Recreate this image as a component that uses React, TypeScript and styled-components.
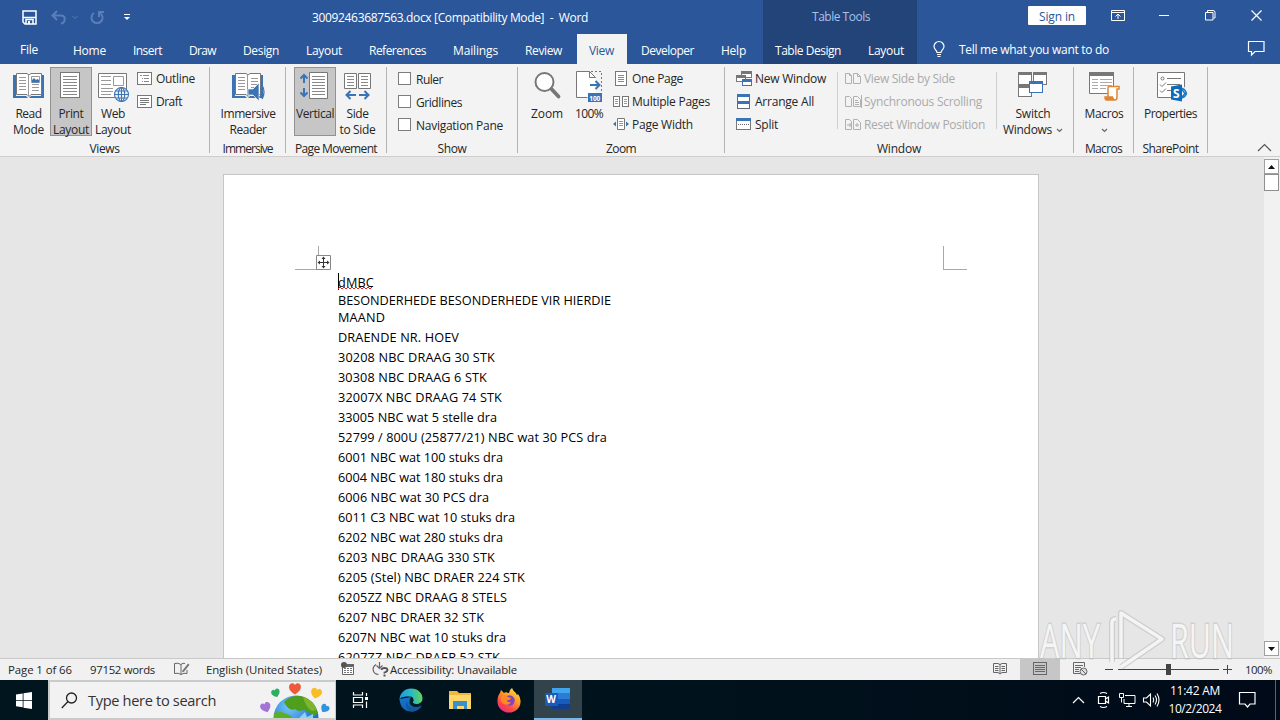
import React, { useLayoutEffect, useRef, useState } from 'react';
import styled, { createGlobalStyle } from 'styled-components';

const Global = createGlobalStyle`
  * { box-sizing: border-box; }
  body { margin: 0; overflow: hidden; background: #e6e6e6; }
  svg { display: block; flex: none; overflow: visible; }
`;

const ui = `"Open Sans", "Noto Sans", sans-serif`;

/* ---------- text set to a given advance width ---------- */
const Tracked = styled.span`
  display: inline-block;
  white-space: pre;
  flex: none;
`;

function Fit({ w, children }: { w: number; children: string }) {
  const ref = useRef<HTMLSpanElement>(null);
  const [spacing, setSpacing] = useState(0);
  useLayoutEffect(() => {
    if (ref.current) {
      const natural = ref.current.getBoundingClientRect().width;
      setSpacing((w - natural) / children.length);
    }
  }, [w, children]);
  return <Tracked ref={ref} style={{ letterSpacing: `${spacing}px` }}>{children}</Tracked>;
}

/* ---------- shell ---------- */
const Shell = styled.div`
  position: relative;
  width: 1280px;
  height: 720px;
  display: flex;
  flex-direction: column;
  overflow: hidden;
  font: 12px/16px ${ui};
  color: #262626;
`;

/* ---------- header ---------- */
const Header = styled.header`
  height: 64px;
  flex: none;
  display: flex;
  background: #2b579a;
  color: #fff;
`;
const HeadCol = styled.div<{ $w: number; $dark?: boolean }>`
  width: ${p => p.$w}px;
  display: flex;
  flex-direction: column;
  background: ${p => (p.$dark ? '#224479' : 'transparent')};
`;
const TitleRow = styled.div<{ $center?: boolean }>`
  height: 34px;
  display: flex;
  align-items: center;
  justify-content: ${p => (p.$center ? 'center' : 'flex-start')};
  padding-left: ${p => (p.$center ? 2 : 0)}px;
  color: ${p => (p.$center ? '#a9c1e6' : '#fff')};
`;
const QuickAccess = styled.div`
  width: 312px;
  padding-left: 22px;
  display: flex;
  align-items: center;
`;
const DocTitle = styled.div`
  padding-top: 2px;
`;
const TabRow = styled.nav`
  height: 30px;
  display: flex;
  gap: 2px;
`;
const Tab = styled.div<{ $active?: boolean; $file?: boolean }>`
  height: 30px;
  padding: ${p => (p.$file ? '8px 21px 0 20px' : '9px 13px 0 12px')};
  background: ${p => (p.$active ? '#f3f3f3' : 'transparent')};
  color: ${p => (p.$active ? '#2b579a' : '#fff')};
`;
const SignIn = styled.div`
  margin: -3px 25px 0 111px;
  width: 58px;
  height: 19px;
  padding: 3px 0 0 11px;
  line-height: 16px;
  background: #fff;
  border-radius: 1px;
  color: #2b579a;
`;
const TellMe = styled.div`
  display: flex;
  width: 363px;
  padding: 7px 0 0 15px;
`;
const TellText = styled.div`
  margin-left: 13px;
  padding-top: 1px;
  width: 289px;
`;
const Gap = styled.span<{ $w: number }>`
  width: ${p => p.$w}px;
  flex: none;
`;

/* ---------- ribbon ---------- */
const Ribbon = styled.section`
  height: 93px;
  flex: none;
  display: flex;
  padding-top: 3px;
  background: #f3f3f3;
  border-bottom: 1px solid #d0cecc;
`;
const Group = styled.div<{ $w: number }>`
  width: ${p => p.$w}px;
  height: 86px;
  flex: none;
  display: flex;
  flex-direction: column;
  border-right: 1px solid #b4b4b4;
`;
const GroupBody = styled.div<{ $pad: number }>`
  height: 73px;
  flex: none;
  display: flex;
  padding-left: ${p => p.$pad}px;
`;
const GroupLabel = styled.div`
  padding-top: 1px;
  text-align: center;
`;
const Big = styled.div<{ $w: number; $on?: boolean }>`
  width: ${p => p.$w}px;
  height: 69px;
  flex: none;
  display: flex;
  flex-direction: column;
  align-items: center;
  padding-top: 3px;
  border: 1px solid ${p => (p.$on ? '#929292' : 'transparent')};
  background: ${p => (p.$on ? '#c6c6c6' : 'transparent')};
`;
const BigIcon = styled.div`
  height: 35px;
  flex: none;
`;
const BigLine = styled.div`
  height: 16px;
  flex: none;
  display: flex;
  justify-content: center;
  align-items: center;
`;
const Rows = styled.div<{ $left?: number; $w?: number }>`
  display: flex;
  flex-direction: column;
  margin-left: ${p => p.$left ?? 0}px;
  width: ${p => (p.$w ? p.$w + 'px' : 'auto')};
`;
const Row = styled.div<{ $dim?: boolean }>`
  height: 23px;
  display: flex;
  align-items: center;
  color: ${p => (p.$dim ? '#aaa' : '#262626')};
`;
const RowIcon = styled.span<{ $w: number }>`
  width: ${p => p.$w}px;
  display: flex;
  flex: none;
`;
const RowText = styled.span`
  display: flex;
  padding-top: 1px;
`;
const Check = styled.span`
  width: 13px;
  height: 13px;
  margin: -3px 5px 0 0;
  background: #fff;
  border: 1px solid #7d7d7d;
`;
const CheckRow = styled(Row)`
  padding-top: 2px;
`;
const Divider = styled.span`
  width: 1px;
  height: 57px;
  margin-top: 5px;
  background: #cfcfcf;
`;
const RibbonEnd = styled.div`
  flex: 1;
  display: flex;
  justify-content: flex-end;
  align-items: flex-end;
  padding: 0 8px 4px 0;
`;

/* ---------- document ---------- */
const Workspace = styled.main`
  height: 501px;
  flex: none;
  display: flex;
  justify-content: space-between;
  padding-left: 223px;
  background: #e6e6e6;
`;
const Page = styled.article`
  position: relative;
  width: 816px;
  height: 484px;
  margin-top: 17px;
  padding: 98px 0 0 114px;
  overflow: hidden;
  background: #fff;
  border: 1px solid #c6c6c6;
  border-bottom: 0;
  color: #000;
  font-size: 12.7px;
`;
const Line = styled.div<{ $h: number }>`
  height: ${p => p.$h}px;
  line-height: ${p => p.$h}px;
`;
const Corner = styled.span<{ $x: number; $right?: boolean }>`
  position: absolute;
  top: 71px;
  left: ${p => p.$x}px;
  width: 24px;
  height: 24px;
  border: 0 solid #a8a8a8;
  border-bottom-width: 1px;
  border-left-width: ${p => (p.$right ? 1 : 0)}px;
  border-right-width: ${p => (p.$right ? 0 : 1)}px;
`;
const Handle = styled.span`
  position: absolute;
  top: 80px;
  left: 92px;
`;
const Caret = styled.span`
  position: absolute;
  top: 98px;
  left: 114px;
  width: 1px;
  height: 17px;
  background: #000;
`;
const Squiggle = styled.span`
  position: absolute;
  top: 111px;
  left: 114px;
`;
const ScrollBar = styled.div`
  width: 16px;
  padding: 2px 1px 2px 0;
  display: flex;
  flex-direction: column;
  background: #f1f1f1;
`;
const ScrollBtn = styled.div`
  width: 15px;
  height: 15px;
  flex: none;
  display: flex;
  align-items: center;
  justify-content: center;
  background: #fff;
  border: 1px solid #a0a0a0;
`;
const Thumb = styled(ScrollBtn)`
  height: 17px;
  margin: 0 0 auto;
  border-color: #8f8f8f;
`;

/* ---------- status bar ---------- */
const Status = styled.footer`
  height: 22px;
  flex: none;
  display: flex;
  align-items: center;
  padding-left: 8px;
  background: #f1f1f1;
  border-top: 1px solid #c9c9c9;
  font-size: 11.4px;
`;
const ViewBtn = styled.span<{ $on?: boolean }>`
  width: 40px;
  height: 22px;
  flex: none;
  display: flex;
  align-items: center;
  justify-content: center;
  background: ${p => (p.$on ? '#c6c6c6' : 'transparent')};
`;

/* ---------- taskbar ---------- */
const Taskbar = styled.div`
  height: 40px;
  flex: none;
  display: flex;
  align-items: center;
  background: linear-gradient(90deg, #00151d, #00131d 50%, #000a18);
  color: #fff;
`;
const Cell = styled.div<{ $w: number; $on?: boolean }>`
  width: ${p => p.$w}px;
  height: 40px;
  flex: none;
  display: flex;
  align-items: center;
  justify-content: center;
  background: ${p => (p.$on ? '#33434b' : 'transparent')};
  border-bottom: ${p => (p.$on ? '2px solid #76b9ed' : '0')};
`;
const Search = styled.div`
  width: 288px;
  height: 40px;
  flex: none;
  display: flex;
  align-items: center;
  padding-left: 11px;
  background: #f2f2f2;
  border: 2px solid #c8cacb;
  border-right-width: 1px;
  color: #333;
  font-size: 14.6px;
  overflow: hidden;
`;
const SearchText = styled.span`
  margin-left: 10px;
  width: 173px;
`;
const Clock = styled.div`
  width: 54px;
  display: flex;
  flex-direction: column;
  align-items: center;
  line-height: 18px;
`;
const Watermark = styled.div`
  position: absolute;
  left: 1036px;
  top: 606px;
  pointer-events: none;
`;

/* ---------- icons ---------- */
type SvgProps = { w: number; h: number; children: React.ReactNode; crisp?: boolean };
const Svg = ({ w, h, children, crisp }: SvgProps) => (
  <svg width={w} height={h} viewBox={`0 0 ${w} ${h}`} fill="none" shapeRendering={crisp ? 'crispEdges' : 'auto'}>{children}</svg>
);
const G = '#777';
const B = '#3a74b4';

const Save = () => (
  <Svg w={15} h={15}><path d="M1 1h13v13H3l-2-2z" stroke="#fff" strokeWidth="1.5" /><path d="M1 7.500h13M4 14v-4.500h7V14" stroke="#fff" strokeWidth="1.5" /><path d="M6 11h2v3H6z" fill="#fff" /></Svg>
);
const Undo = () => (
  <Svg w={28} h={15}><path d="M6 1L1.500 5.500 6 10M2 5.500h8c5 0 5 7 0 8" stroke="#5a7fb8" strokeWidth="2" /><path d="M21.500 6l2.500 2.500L26.500 6" stroke="#5a7fb8" /></Svg>
);
const Redo = () => (
  <Svg w={15} h={15}><path d="M4 3a5.500 5.500 0 1 0 6 0M9 7V2h5" stroke="#5a7fb8" strokeWidth="2" /></Svg>
);
const Customize = () => <Svg w={8} h={8}><path d="M1 1.500h6" stroke="#fff" /><path d="M1 4h6L4 7z" fill="#fff" /></Svg>;
const RibbonOpts = () => (
  <Svg w={14} h={14}><path d="M.5.5h13v10H.5zM.5 2.500h13" stroke="#fff" /><path d="M7 9V4.500M4.500 6.500L7 4l2.500 2.500" stroke="#fff" /></Svg>
);
const Minimize = () => <Svg w={11} h={15} crisp><path d="M0 5.500h10" stroke="#fff" /></Svg>;
const Restore = () => <Svg w={11} h={14}><path d="M.5 2.500h7.500v7.500H.5z" stroke="#fff" /><path d="M2.500 2V.5H8q2 0 2 2v5.500H8.500" stroke="#fff" /></Svg>;
const Close = () => <Svg w={11} h={14}><path d="M.5.5l10 10M10.500.5l-10 10" stroke="#fff" strokeWidth="1.200" /></Svg>;
const Bulb = () => (
  <Svg w={14} h={17}><path d="M5 11.500C5 9 2 8.500 2 5.500a5 5 0 0 1 10 0C12 8.500 9 9 9 11.500zM5 13.500h4M5.500 15.500h3" stroke="#fff" strokeWidth="1.200" /></Svg>
);
const Comment = () => <Svg w={17} h={15}><path d="M.5.5h15.500v10H7L3.500 14v-3.500h-3z" stroke="#fff" strokeWidth="1.200" /></Svg>;

const Book = ({ speaker, w = 32 }: { speaker?: boolean; w?: number }) => (
  <Svg w={w} h={32}>
    <path d="M0 4h3v21h10l2 2H0zM31 4h-3v21H18l-2 2h15z" fill={B} />
    <path d="M3.500 2.500H14l2 1.500 2-1.500h10.500v21H18l-2 2-2-2H3.500z" fill="#fff" stroke="#777" />
    <path d="M15.500 4v21M6 6.500h7M6 9.500h7M6 12.500h7M6 15.500h7M6 18.500h7M19 13.500h7M19 16.500h7M19 19.500h7" stroke="#999" />
    {speaker ? (
      <><path d="M19 7.500h7M19 10.500h7" stroke="#999" /><path d="M16 18h5l6-6v18l-6-6h-5z" fill={B} stroke="#f3f3f3" strokeWidth=".7" /><path d="M28.500 17q2.500 4 0 8M30 14q4 7 0 14" stroke={B} strokeWidth="1.300" /></>
    ) : (
      <><path d="M18.500 5.500h8v6h-8z" stroke="#999" fill="#fff" /><path d="M19 11.500V9l2-2 2 2 1.500-1L26 9v2.500z" fill={B} /></>
    )}
  </Svg>
);
const PrintPage = () => (
  <Svg w={22} h={28} crisp><path d="M.5 1.500h19v25H.5z" fill="#fff" stroke={G} /><path d="M3 5.500h14M3 8.500h14M3 11.500h14M3 14.500h14M3 17.500h14M3 20.500h14M3 23.500h14" stroke="#888" /></Svg>
);
const Globe = ({ x, y, r }: { x: number; y: number; r: number }) => (
  <g stroke={B} strokeWidth="1.100"><circle cx={x} cy={y} r={r} fill="#f3f3f3" /><ellipse cx={x} cy={y} rx={r / 2.200} ry={r} /><path d={`M${x - r} ${y}h${2 * r}M${x - r * .8} ${y - r / 2}h${r * 1.600}M${x - r * .8} ${y + r / 2}h${r * 1.600}M${x} ${y - r}v${2 * r}`} /></g>
);
const WebPage = () => (
  <Svg w={32} h={32}><path d="M1.500 2.500h28v24h-28z" fill="#fff" stroke={G} /><path d="M4 5.500h10M4 9.500h10M4 13.500h10M4 17.500h12M4 20.500h12M4 23.500h10" stroke="#999" /><path d="M16.500 5.500h10v9h-10z" stroke="#999" /><Globe x={24.5} y={23.5} r={7} /></Svg>
);
const OutlineIcon = ({ draft }: { draft?: boolean }) => (
  <Svg w={16} h={13} crisp><path d="M.5.5h14v12H.5z" fill="#fff" stroke={G} />{draft ? <path d="M3 3.500h9M3 5.500h9M3 7.500h9M3 9.500h6" stroke="#777" /> : <path d="M3 3.500h2M6 3.500h6M5 6.500h1M7 6.500h5M5 9.500h1M7 9.500h5" stroke="#888" />}</Svg>
);
const VerticalIcon = () => (
  <Svg w={32} h={32}><path d="M10.500 1.500h18v26h-18z" fill="#fff" stroke={G} /><path d="M13 5.500h13M13 8.500h13M13 11.500h13M13 14.500h13M13 17.500h13M13 20.500h13M13 23.500h13" stroke="#888" /><path d="M5 4v8M1.500 7.500L5 4l3.500 3.500M5 17v8M1.500 21.500L5 25l3.500-3.500" stroke={B} strokeWidth="2" /></Svg>
);
const SideIcon = () => (
  <Svg w={27} h={32}><path d="M.5 2.500h12v15H.5zM14.500 2.500h12v15h-12z" fill="#fff" stroke={G} /><path d="M3 5.500h7M3 8.500h7M3 11.500h7M3 14.500h7M17 5.500h7M17 8.500h7M17 11.500h7M17 14.500h7" stroke="#888" /><path d="M3 24h9M6.500 20L2.500 24l4 4M15 24h9M20.500 20l4 4-4 4" stroke={B} strokeWidth="2" /></Svg>
);
const Magnifier = () => (
  <Svg w={28} h={32}><circle cx="11.500" cy="11" r="9" fill="#fff" stroke={G} strokeWidth="2" /><path d="M18.500 18l7 7.500" stroke={G} strokeWidth="3.800" strokeLinecap="round" /></Svg>
);
const HundredIcon = () => (
  <Svg w={28} h={33}>
    <path d="M1.500.5h13l6 6v20h-19z" fill="#fff" /><path d="M20.500 6.500l-6-6h-13v26h11M14.500.5v6h6" stroke={G} /><path d="M16 .5h10.500v20" stroke="#777" strokeDasharray="2 2" />
    <path d="M15 14h9M20.500 10l4 4-4 4" stroke={B} strokeWidth="2" /><rect x="13" y="22" width="14" height="9" fill={B} />
    <text x="14.200" y="29.500" fontSize="6.500" fontWeight="700" fill="#fff" fontFamily="Open Sans, sans-serif">100</text>
  </Svg>
);
const OnePage = () => <Svg w={16} h={16} crisp><path d="M2.500.5h11v14h-11z" fill="#fff" stroke={G} /><path d="M5 4.500h6M5 6.500h6M5 8.500h6M5 10.500h6" stroke="#888" /></Svg>;
const MultiPage = () => <Svg w={17} h={12} crisp><path d="M.5.5h6v10h-6zM9.500.5h6v10h-6z" fill="#fff" stroke={G} /><path d="M2 3.500h3M2 5.500h3M2 7.500h3M11 3.500h3M11 5.500h3M11 7.500h3" stroke="#999" /></Svg>;
const PageWidth = () => <Svg w={16} h={13}><path d="M4.500.5h7v11h-7z" fill="#fff" stroke={G} /><path d="M6 3.500h4M6 5.500h4M6 7.500h4" stroke="#999" /><path d="M0 6l3-2.500v5zM16 6l-3-2.500v5z" fill={B} /></Svg>;
const NewWin = () => (
  <Svg w={17} h={16} crisp><path d="M5.500 1.500h10v5h-10z" fill="#fff" stroke={G} /><path d="M5 0h11v3H5z" fill="#777" /><path d="M.5 5.500h9v5h-9z" fill="#fff" stroke={G} /><path d="M0 4h10v3H0z" fill="#777" /><path d="M6.500 9.500h9v5h-9z" fill="#fff" stroke={B} /><path d="M6 8h10v3H6z" fill={B} /></Svg>
);
const Arrange = () => <Svg w={15} h={16} crisp><path d="M1.500.5h12v14h-12z" fill="#fff" stroke="#667" /><path d="M1 0h13v3H1zM1 7h13v3H1z" fill={B} /></Svg>;
const SplitIcon = () => <Svg w={16} h={13} crisp><path d="M.5.5h14v11H.5z" fill="#fff" stroke={G} /><path d="M0 0h15v3H0z" fill={B} /><path d="M2 6.500h12" stroke="#666" strokeDasharray="1 1" /></Svg>;
const Pair = ({ kind }: { kind: number }) => (
  <Svg w={17} h={13}><path d="M.5 1.500h4l2 2v8h-6zM8.500 1.500h4l3 3v7h-7z" stroke="#b0b0b0" />{kind === 0 && <path d="M4.500 1.500v2h2M12.500 1.500v3h3" stroke="#b0b0b0" />}{kind === 1 && <path d="M10 5.500h3M10 7.500h4M10 9.500h4M16.500 0v13" stroke="#b0b0b0" />}{kind === 2 && <path d="M2 7h5M5 5v4M10 7h4M12 5v4" stroke="#b0b0b0" />}</Svg>
);
const SwitchIcon = () => (
  <Svg w={30} h={32} crisp><path d="M.5 2.500h13v11H.5zM15.500 2.500h13v11h-13zM.5 15.500h13v10H.5z" fill="#fff" stroke={G} /><path d="M0 1h14v3H0zM15 1h14v3H15zM0 14h14v3H0z" fill="#777" /><path d="M11.500 11.500h13v10h-13z" fill="#fff" stroke={B} /><path d="M11 10h14v3H11z" fill={B} /></Svg>
);
const MacroIcon = () => (
  <Svg w={32} h={32}><path d="M1.500 2.500h24v20h-24z" fill="#fff" stroke={G} /><path d="M1 1h25v4H1z" fill="#777" /><path d="M4 8.500h6M12 8.500h12M4 11.500h6M12 11.500h12M4 14.500h6M12 14.500h12M4 17.500h6M12 17.500h6" stroke="#aaa" /><path d="M20 26V17q0-1.500 1.500-1.500H31V18h-2v8q0 3-2 3h-8.500q-1.500 0-1.500-3h8" fill="#fff" stroke="#e08535" strokeWidth="1.500" /><path d="M17 26h8l2 3H18z" fill="#e08535" /></Svg>
);
const PropIcon = () => (
  <Svg w={29} h={32}><path d="M1.500 1.500h27v25h-27z" fill="#fff" stroke={G} /><circle cx="6.500" cy="7.500" r="1.500" stroke="#777" /><path d="M11 7.500h14M11 13.500h14M11 19.500h5M4 13.500l2 2 4-4M4 19.500l2 2 4-4" stroke="#777" /><path d="M24 12l6.500 6v8L24 29z" fill="#f3f3f3" /><path d="M24 17q5 0 6.500 5.500-1.500 4.500-6.500 4.500M26 18.500l3 4-3 3.500" stroke="#1976c4" strokeWidth="1.400" /><path d="M15 15.500l11-2v17l-11-2z" fill="#0f6cbd" /><text x="17" y="26.500" fontSize="12" fontWeight="700" fill="#fff" fontFamily="Open Sans, sans-serif">S</text></Svg>
);
const Chevron = () => <Svg w={7} h={5}><path d="M1 1l2.500 2.500L6 1" stroke="#666" strokeWidth="1.200" /></Svg>;

const MoveHandle = () => <Svg w={15} h={15}><path d="M.5.5h14v14H.5z" fill="#fff" stroke="#888" /><path d="M7.500 3v9M3 7.500h9" stroke="#333" /><path d="M7.500 1.500l2 2.500h-4zM7.500 13.500l2-2.500h-4zM1.500 7.500l2.500-2v4zM13.500 7.500l-2.500-2v4z" fill="#333" /></Svg>;
const ProofIcon = () => <Svg w={16} h={16}><path d="M7 2.500Q4 .5.500 1.500v10q4-1 6.500 1zM7 2.500q2-2 4-1M7 12.500q3-2 6-1V8" stroke="#666" /><path d="M8.500 8.500l5.500-7 1.500 1.200-5.500 7-2 .5z" fill="#777" /></Svg>;
const MacroRec = () => <Svg w={14} h={16}><path d="M1.500 4.500h11v8h-11z" fill="#fff" stroke="#666" /><path d="M6 2h7v2.500H6z" fill="#666" /><path d="M3 6.500h8M3 8.500h8M3 10.500h8" stroke="#777" strokeDasharray="2 1" /><circle cx="3" cy="3" r="3" fill="#555" /></Svg>;
const AccessIcon = () => <Svg w={17} h={15}><path d="M4 2.500C-1 6 1 12 6.500 12.500M7.500 0v6M4.500 3.500l3 3 3-3" stroke="#666" strokeWidth="1.200" /><path d="M9.500 8q0-2 3-2t3 2q0 1.500-3 2.500v1M11.500 13.500h2" stroke="#555" strokeWidth="1.800" /></Svg>;
const ReadView = () => <Svg w={14} h={15}><path d="M7 2.500L5 1.500H.5v9H5l2 1.500 2-1.500h4.500v-9H9zM7 2v10M2 4.500h3.500M2 6.500h3.500M2 8.500h3.500M8.500 4.500H12M8.500 6.500H12M8.500 8.500H12" stroke="#666" /></Svg>;
const PrintView = () => <Svg w={14} h={15} crisp><path d="M.5.5h13v12H.5zM2 3.500h10M2 5.500h10M2 7.500h10M2 9.500h10" stroke="#666" /></Svg>;
const WebView = () => <Svg w={15} h={15}><path d="M7 11.500H.5v-11h11V5M2 3.500h8M2 5.500h6M2 7.500h4M2 9.500h4" stroke="#666" /><circle cx="10.500" cy="9.500" r="3.500" stroke="#666" fill="#ddd" /><path d="M8 7l5 5" stroke="#666" /></Svg>;
const ZoomSlider = () => <Svg w={127} h={13} crisp><path d="M0 6.500h8M13 6.500h101M118 6.500h9M122.500 2v9" stroke="#444" /><path d="M61 1h5v11h-5z" fill="#444" /></Svg>;

const WinLogo = () => <Svg w={16} h={17}><path d="M0 2.500L6.700 1.500v6.500H0zM7.500 1.300L16 0v8H7.500zM0 8.800h6.700v6.500L0 14.300zM7.500 8.800H16V17l-8.500-1.300z" fill="#fff" /></Svg>;
const SearchGlyph = () => <Svg w={17} h={17}><circle cx="10.500" cy="6" r="5" stroke="#222" strokeWidth="1.300" /><path d="M7 9.500L.8 16" stroke="#222" strokeWidth="1.300" /></Svg>;
const heart = 'M0 4C-7 0-5-5-2-5-.6-5 0-3.500 0-3.500S.6-5 2-5C5-5 7 0 0 4z';
const Earth = () => (
  <Svg w={70} h={36}>
    <defs><radialGradient id="sea" cx=".35" cy=".25" r=".9"><stop stopColor="#73c8f7" /><stop offset=".5" stopColor="#3283d7" /><stop offset="1" stopColor="#1557a4" /></radialGradient><clipPath id="disc"><circle cx="35" cy="36" r="22.500" /></clipPath></defs>
    <circle cx="35" cy="36" r="22.500" fill="url(#sea)" />
    <g clipPath="url(#disc)"><path d="M23 20q8-8 20-6 12 4 14 17l-5 4-4-5q-5 1-4-3-6 4-10 0-6 3-11-7z" fill="#4f9f1c" /><path d="M13 32q5-4 10-1 8 2 10 7H13z" fill="#5fae22" /><path d="M42 14q10 2 14 14l-5 1q-7-4-9-15z" fill="#7db52c" /><path d="M38 36l6-6 2 5 6-3v6H38z" fill="#8fd0fb" /></g>
    <path d={heart} transform="translate(34 7.500) scale(1.250)" fill="#ee5b3c" />
    <path d={heart} transform="translate(15 11.500) rotate(-20) scale(.9)" fill="#2eae60" />
    <path d={heart} transform="translate(55 12) rotate(15) scale(1.150)" fill="#f8bd25" />
    <path d={heart} transform="translate(5 26) rotate(-20) scale(1.100)" fill="#a574d8" />
    <path d={heart} transform="translate(63.500 27) rotate(35) scale(.9)" fill="#2e94e0" />
  </Svg>
);
const TaskView = () => <Svg w={18} h={16}><path d="M1.500 0v3h9V0M1.500 16v-3h9v3M1.500 5.500h9v5h-9zM14.500 1v3M14.500 9.500V16" stroke="#fff" strokeWidth="1.200" /><path d="M13 5h3v3h-3z" fill="#fff" /></Svg>;
const Edge = () => (
  <Svg w={24} h={24}>
    <defs><linearGradient id="e1" x1="0" x2="1" y1=".4" y2=".3"><stop stopColor="#2299dd" /><stop offset=".5" stopColor="#28b9c6" /><stop offset="1" stopColor="#65d74e" /></linearGradient><linearGradient id="e2" x1="0" x2=".6" y1="0" y2="1"><stop stopColor="#1478c9" /><stop offset="1" stopColor="#1260b8" /></linearGradient></defs>
    <path d="M.5 11C1 16 3 23.500 12.500 23.500c4.500 0 8.500-2.500 10.300-6-7 3-11 1-11.300-4L12 9z" fill="url(#e2)" />
    <path d="M.5 12C.5 5 6 .5 12 .5c7 0 12 5 11.500 10.500-.3 3.500-3 5-6 5-3 0-4-1-3.500-2 1-1.500 1-5-3-5.500C6 8 1 9 .5 12z" fill="url(#e1)" />
    <path d="M11 9.500c-4 2-4 8 1 9.500 4 1.500 8 .5 10.500-1-2.500 4-6 5.500-10 5.500-6-1-8-9-1.500-14z" fill="#15569f" />
    <path d="M11.500 9.800q3.500 1 2.500 4-.8 1.400 1.500 2.200 3 .8 6.500-.7v2.500q-5 2-8 .7-3.500-1.500-3.500-4.500 0-2.500 1-4.200z" fill="#04202d" />
  </Svg>
);
const Folder = () => <Svg w={22} h={20}><path d="M0 1h8l2 2h12v16H0z" fill="#f0b73c" /><path d="M0 5h22v14H0z" fill="#fdd868" /><path d="M4 11h14v8h-3v-3H8v3H4z" fill="#3b8fcb" /></Svg>;
const Firefox = () => (
  <Svg w={24} h={24}>
    <defs><linearGradient id="ff" x1=".8" x2=".2" y1="0" y2="1"><stop stopColor="#ffe24a" /><stop offset=".4" stopColor="#ff9a22" /><stop offset=".75" stopColor="#ff4150" /><stop offset="1" stopColor="#e02a88" /></linearGradient></defs>
    <path d="M3 5l1-3 3 3 2-1q1 1 3 1Q12 2 15 0q1 3 4 5 0 1 1 2l1-1q3 4 2.500 8A11.500 10.500 0 0 1 .5 14Q.3 8 3 5z" fill="url(#ff)" /><circle cx="12.500" cy="12.500" r="5.200" fill="#8343c8" /><path d="M4 9q4-3 7 0l3 1q0 2-4 2 0 3 4 2-2 4-7 2-4-2-3-7z" fill="#ff8a24" />
  </Svg>
);
const WordIcon = () => (
  <Svg w={26} h={22}><path d="M7 0h18v6H7z" fill="#41a5ee" /><path d="M7 5h18v6H7z" fill="#2b7cd3" /><path d="M7 11h18v5H7z" fill="#185abd" /><path d="M7 16h18v5H7z" fill="#103f91" /><rect y="5" width="13" height="13" rx="1" fill="#185abd" /><text x="1.300" y="15.200" fontSize="10" fontWeight="700" fill="#fff" fontFamily="Open Sans, sans-serif">W</text></Svg>
);
const TrayUp = () => <Svg w={13} h={8}><path d="M1 7l5.500-5.500L12 7" stroke="#fff" strokeWidth="1.200" /></Svg>;
const Camera = () => <Svg w={13} h={16}><path d="M1.500 4.500h7v7h-7zM8.500 7l3-2v6l-3-2M3 1.500q3.500-2 7 0M3 14.500q3.500 2 7 0" stroke="#fff" strokeWidth="1.200" /></Svg>;
const Network = () => <Svg w={17} h={14}><path d="M6 2.500h10v8H5V6M7 13.500h6M10 10.500v3M.5.500h4v4h-4zM2.500 4.500v5" stroke="#fff" /></Svg>;
const Volume = () => <Svg w={17} h={14}><path d="M.5 5h3l4-4v12l-4-4h-3zM10 4.500q1.500 2.500 0 5M12 2.500q3 4.500 0 9M14 .5q4 6.500 0 13" stroke="#fff" strokeWidth="1.100" /></Svg>;
const Notice = () => <Svg w={17} h={16}><path d="M.5.500h15.500v11.500H11l-2.500 3-2.500-3H.5z" stroke="#fff" strokeWidth="1.200" /></Svg>;
const Peek = styled.span`
  width: 1px;
  height: 40px;
  margin-left: 19px;
  background: #5b626b;
`;

/* ---------- data ---------- */
const tabs: [string, number][] = [['Home', 33], ['Insert', 29], ['Draw', 27], ['Design', 36], ['Layout', 36], ['References', 57], ['Mailings', 45], ['Review', 37], ['View', 25], ['Developer', 53], ['Help', 25]];
const lines: [string, number, number][] = [
  ['dMBC', 36, 18], ['BESONDERHEDE BESONDERHEDE VIR HIERDIE', 273, 18], ['MAAND', 47, 17], ['DRAENDE NR. HOEV', 121, 22],
  ['30208 NBC DRAAG 30 STK', 157, 19], ['30308 NBC DRAAG 6 STK', 149, 20], ['32007X NBC DRAAG 74 STK', 164, 20], ['33005 NBC wat 5 stelle dra', 159, 20],
  ['52799 / 800U (25877/21) NBC wat 30 PCS dra', 269, 20], ['6001 NBC wat 100 stuks dra', 165, 20], ['6004 NBC wat 180 stuks dra', 165, 20],
  ['6006 NBC wat 30 PCS dra', 151, 20], ['6011 C3 NBC wat 10 stuks dra', 177, 20], ['6202 NBC wat 280 stuks dra', 165, 20], ['6203 NBC DRAAG 330 STK', 157, 20],
  ['6205 (Stel) NBC DRAER 224 STK', 187, 20], ['6205ZZ NBC DRAAG 8 STELS', 169, 20], ['6207 NBC DRAER 32 STK', 146, 20], ['6207N NBC wat 10 stuks dra', 168, 20], ['6207ZZ NBC DRAER 52 STK', 162, 20],
];

type BigProps = { w: number; icon: React.ReactNode; a: [string, number]; b?: [string, number]; on?: boolean; more?: boolean };
const BigButton = ({ w, icon, a, b, on, more }: BigProps) => (
  <Big $w={w} $on={on}>
    <BigIcon>{icon}</BigIcon>
    <BigLine><Fit w={a[1]}>{a[0]}</Fit></BigLine>
    <BigLine>{b && <Fit w={b[1]}>{b[0]}</Fit>}{more && <>{b && <Gap $w={4} />}<Chevron /></>}</BigLine>
  </Big>
);
const Item = ({ icon, iw, text, w, dim }: { icon: React.ReactNode; iw: number; text: string; w: number; dim?: boolean }) => (
  <Row $dim={dim}><RowIcon $w={iw}>{icon}</RowIcon><RowText><Fit w={w}>{text}</Fit></RowText></Row>
);

export default function App() {
  return (
    <Shell>
      <Global />
      <Header>
        <HeadCol $w={763}>
          <TitleRow>
            <QuickAccess><Save /><Gap $w={14} /><Undo /><Gap $w={11} /><Redo /><Gap $w={18} /><Customize /></QuickAccess>
            <DocTitle><Fit w={276}>30092463687563.docx [Compatibility Mode]  -  Word</Fit></DocTitle>
          </TitleRow>
          <TabRow>
            <Tab $file><Fit w={18}>File</Fit></Tab>
            {tabs.map(([t, w]) => <Tab key={t} $active={t === 'View'}><Fit w={w}>{t}</Fit></Tab>)}
          </TabRow>
        </HeadCol>
        <HeadCol $w={154} $dark>
          <TitleRow $center><Fit w={58}>Table Tools</Fit></TitleRow>
          <TabRow><Tab><Fit w={66}>Table Design</Fit></Tab><Tab><Fit w={36}>Layout</Fit></Tab></TabRow>
        </HeadCol>
        <HeadCol $w={363}>
          <TitleRow>
            <SignIn><Fit w={36}>Sign in</Fit></SignIn>
            <RibbonOpts /><Gap $w={34} /><Minimize /><Gap $w={35} /><Restore /><Gap $w={35} /><Close />
          </TitleRow>
          <TellMe><Bulb /><TellText><Fit w={150}>Tell me what you want to do</Fit></TellText><Comment /></TellMe>
        </HeadCol>
      </Header>

      <Ribbon>
        <Group $w={210}>
          <GroupBody $pad={7}>
            <BigButton w={43} icon={<Book w={31} />} a={['Read', 26]} b={['Mode', 31]} />
            <BigButton w={42} on icon={<PrintPage />} a={['Print', 25]} b={['Layout', 36]} />
            <BigButton w={42} icon={<WebPage />} a={['Web', 24]} b={['Layout', 36]} />
            <Rows $left={3}>
              <Item icon={<OutlineIcon />} iw={19} text="Outline" w={39} />
              <Item icon={<OutlineIcon draft />} iw={19} text="Draft" w={26} />
            </Rows>
          </GroupBody>
          <GroupLabel><Fit w={30}>Views</Fit></GroupLabel>
        </Group>
        <Group $w={76}>
          <GroupBody $pad={8}><BigButton w={60} icon={<Book speaker />} a={['Immersive', 55]} b={['Reader', 37]} /></GroupBody>
          <GroupLabel><Fit w={50}>Immersive</Fit></GroupLabel>
        </Group>
        <Group $w={101}>
          <GroupBody $pad={8}>
            <BigButton w={42} on icon={<VerticalIcon />} a={['Vertical', 38]} />
            <BigButton w={43} icon={<SideIcon />} a={['Side', 22]} b={['to Side', 36]} />
          </GroupBody>
          <GroupLabel><Fit w={82}>Page Movement</Fit></GroupLabel>
        </Group>
        <Group $w={131}>
          <GroupBody $pad={11}>
            <Rows>
              <CheckRow><Check /><Fit w={27}>Ruler</Fit></CheckRow>
              <CheckRow><Check /><Fit w={46}>Gridlines</Fit></CheckRow>
              <CheckRow><Check /><Fit w={87}>Navigation Pane</Fit></CheckRow>
            </Rows>
          </GroupBody>
          <GroupLabel><Fit w={29}>Show</Fit></GroupLabel>
        </Group>
        <Group $w={207}>
          <GroupBody $pad={8}>
            <BigButton w={42} icon={<Magnifier />} a={['Zoom', 32]} />
            <BigButton w={42} icon={<HundredIcon />} a={['100%', 28]} />
            <Rows $left={3}>
              <Item icon={<OnePage />} iw={19} text="One Page" w={51} />
              <Item icon={<MultiPage />} iw={19} text="Multiple Pages" w={78} />
              <Item icon={<PageWidth />} iw={19} text="Page Width" w={61} />
            </Rows>
          </GroupBody>
          <GroupLabel><Fit w={30}>Zoom</Fit></GroupLabel>
        </Group>
        <Group $w={349}>
          <GroupBody $pad={11}>
            <Rows $w={101}>
              <Item icon={<NewWin />} iw={19} text="New Window" w={71} />
              <Item icon={<Arrange />} iw={19} text="Arrange All" w={59} />
              <Item icon={<SplitIcon />} iw={19} text="Split" w={23} />
            </Rows>
            <Divider />
            <Rows $left={7} $w={151}>
              <Item dim icon={<Pair kind={0} />} iw={19} text="View Side by Side" w={91} />
              <Item dim icon={<Pair kind={1} />} iw={19} text="Synchronous Scrolling" w={118} />
              <Item dim icon={<Pair kind={2} />} iw={19} text="Reset Window Position" w={121} />
            </Rows>
            <Divider />
            <BigButton w={72} icon={<SwitchIcon />} a={['Switch', 35]} b={['Windows', 49]} more />
          </GroupBody>
          <GroupLabel><Fit w={44}>Window</Fit></GroupLabel>
        </Group>
        <Group $w={60}>
          <GroupBody $pad={4}><BigButton w={52} icon={<MacroIcon />} a={['Macros', 39]} more /></GroupBody>
          <GroupLabel><Fit w={37}>Macros</Fit></GroupLabel>
        </Group>
        <Group $w={74}>
          <GroupBody $pad={4}><BigButton w={65} icon={<PropIcon />} a={['Properties', 53]} /></GroupBody>
          <GroupLabel><Fit w={56}>SharePoint</Fit></GroupLabel>
        </Group>
        <RibbonEnd><Svg w={15} h={9}><path d="M1 8l6.500-6.500L14 8" stroke="#555" strokeWidth="1.200" /></Svg></RibbonEnd>
      </Ribbon>

      <Workspace>
        <Page>
          {lines.map(([t, w, h]) => <Line key={t} $h={h}><Fit w={w}>{t}</Fit></Line>)}
          <Corner $x={71} /><Corner $x={719} $right />
          <Handle><MoveHandle /></Handle>
          <Caret />
          <Squiggle><Svg w={37} h={4}><path d="M0 3l2-2 2 2 2-2 2 2 2-2 2 2 2-2 2 2 2-2 2 2 2-2 2 2 2-2 2 2 2-2 2 2 2-2" stroke="#e02020" /></Svg></Squiggle>
        </Page>
        <ScrollBar>
          <ScrollBtn><Svg w={7} h={4}><path d="M0 4l3.500-4L7 4z" fill="#111" /></Svg></ScrollBtn>
          <Thumb />
          <ScrollBtn><Svg w={7} h={4}><path d="M0 0h7L3.500 4z" fill="#111" /></Svg></ScrollBtn>
        </ScrollBar>
      </Workspace>

      <Status>
        <Fit w={64}>Page 1 of 66</Fit><Gap $w={18} />
        <Fit w={65}>97152 words</Fit><Gap $w={19} />
        <ProofIcon /><Gap $w={16} />
        <Fit w={116}>English (United States)</Fit><Gap $w={19} />
        <MacroRec /><Gap $w={17} />
        <AccessIcon /><Gap $w={1} />
        <Fit w={127}>Accessibility: Unavailable</Fit><Gap $w={463} />
        <ViewBtn><ReadView /></ViewBtn><ViewBtn $on><PrintView /></ViewBtn><ViewBtn><WebView /></ViewBtn>
        <Gap $w={5} /><ZoomSlider /><Gap $w={13} /><Fit w={27}>100%</Fit>
      </Status>

      <Taskbar>
        <Cell $w={48}><WinLogo /></Cell>
        <Search><SearchGlyph /><SearchText><Fit w={128}>Type here to search</Fit></SearchText><Earth /></Search>
        <Cell $w={50}><TaskView /></Cell>
        <Cell $w={49}><Edge /></Cell>
        <Cell $w={49}><Folder /></Cell>
        <Cell $w={50}><Firefox /></Cell>
        <Cell $w={48} $on><WordIcon /></Cell>
        <Gap $w={490} />
        <TrayUp /><Gap $w={12} /><Camera /><Gap $w={9} /><Network /><Gap $w={7} /><Volume /><Gap $w={8} />
        <Clock><Fit w={50}>11:42 AM</Fit><Fit w={53}>10/2/2024</Fit></Clock>
        <Gap $w={17} /><Notice /><Peek />
      </Taskbar>

      <Watermark>
        <svg width="204" height="66" viewBox="0 0 204 66" fill="none">
          <g fill="#fafafa" fillOpacity=".9" stroke="#b8b8b8" strokeOpacity=".45" strokeWidth="3" paintOrder="stroke" fontFamily="Open Sans, sans-serif" fontSize="48">
            <text x="4" y="52" textLength="60" lengthAdjust="spacingAndGlyphs">ANY</text>
            <text x="134" y="52" textLength="64" lengthAdjust="spacingAndGlyphs">RUN</text>
          </g>
          <g stroke="#b0b0b0" strokeOpacity=".45" strokeWidth="6" strokeLinejoin="round"><path d="M76 56V17q0-4 4-4M85 52V7l41 26-41 28" /></g>
          <g stroke="#fafafa" strokeOpacity=".85" strokeWidth="3.500" strokeLinejoin="round"><path d="M76 56V17q0-4 4-4M85 52V7l41 26-41 28" /></g>
        </svg>
      </Watermark>
    </Shell>
  );
}
